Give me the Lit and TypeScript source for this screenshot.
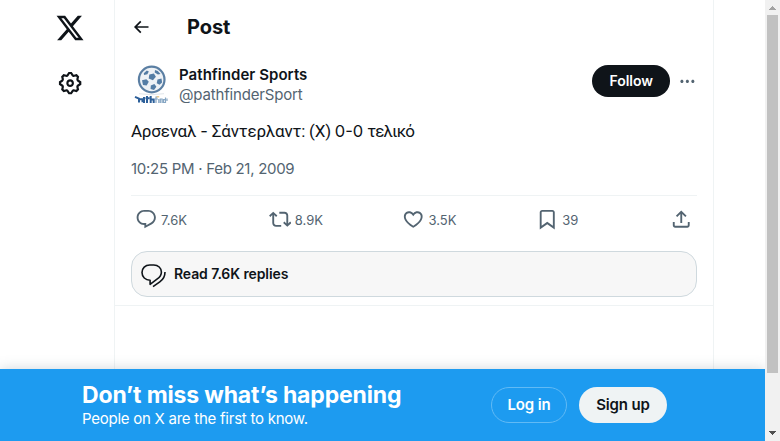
import { LitElement, html, css, svg } from "lit";
import { customElement, property } from "lit/decorators.js";

const ICONS: Record<string, string> = {
  logo: "M18.244 2.25h3.308l-7.227 8.26 8.502 11.24H16.17l-5.214-6.817L4.99 21.75H1.68l7.73-8.835L1.254 2.25H8.08l4.713 6.231zm-1.161 17.52h1.833L7.084 4.126H5.117z",
  settings: "M10.54 1.75h2.92l1.57 2.36c.11.17.32.25.53.21l2.53-.59 2.17 2.17-.58 2.54c-.05.2.04.41.21.53l2.36 1.57v2.92l-2.36 1.57c-.17.12-.26.33-.21.53l.58 2.54-2.17 2.17-2.53-.59c-.21-.04-.42.04-.53.21l-1.57 2.36h-2.92l-1.58-2.36c-.11-.17-.32-.25-.52-.21l-2.54.59-2.17-2.17.58-2.54c.05-.2-.03-.41-.21-.53l-2.35-1.57v-2.92L4.1 8.97c.18-.12.26-.33.21-.53L3.73 5.9 5.9 3.73l2.54.59c.2.04.41-.04.52-.21l1.58-2.36zm1.07 2l-.98 1.47C10.05 6.08 9 6.5 7.99 6.27l-1.46-.34-.6.6.33 1.46c.24 1.01-.18 2.07-1.05 2.64l-1.46.98v.78l1.46.98c.87.57 1.29 1.63 1.05 2.64l-.33 1.46.6.6 1.46-.34c1.01-.23 2.06.19 2.64 1.05l.98 1.47h.78l.97-1.47c.58-.86 1.63-1.28 2.65-1.05l1.45.34.61-.6-.34-1.46c-.23-1.01.18-2.07 1.05-2.64l1.47-.98v-.78l-1.47-.98c-.87-.57-1.28-1.63-1.05-2.64l.34-1.46-.61-.6-1.45.34c-1.02.23-2.07-.19-2.65-1.05l-.97-1.47h-.78zM12 10.5c-.83 0-1.5.67-1.5 1.5s.67 1.5 1.5 1.5 1.5-.67 1.5-1.5-.67-1.5-1.5-1.5zM8.5 12c0-1.93 1.57-3.5 3.5-3.5s3.5 1.57 3.5 3.5-1.57 3.5-3.5 3.5-3.5-1.57-3.5-3.5z",
  back: "M7.414 13l5.043 5.04-1.414 1.42L3.586 12l7.457-7.46 1.414 1.42L7.414 11H21v2H7.414z",
  more: "M3 12c0-1.1.9-2 2-2s2 .9 2 2-.9 2-2 2-2-.9-2-2zm9 2c1.1 0 2-.9 2-2s-.9-2-2-2-2 .9-2 2 .9 2 2 2zm7 0c1.1 0 2-.9 2-2s-.9-2-2-2-2 .9-2 2 .9 2 2 2z",
  reply: "M1.751 10c0-4.42 3.584-8 8.005-8h4.366c4.49 0 8.129 3.64 8.129 8.13 0 2.96-1.607 5.68-4.196 7.11l-8.054 4.46v-3.69h-.067c-4.49.1-8.183-3.51-8.183-8.01zm8.005-6c-3.317 0-6.005 2.69-6.005 6 0 3.37 2.77 6.08 6.138 6.01l.351-.01h1.761v2.3l5.087-2.81c1.951-1.08 3.163-3.13 3.163-5.36 0-3.39-2.744-6.13-6.129-6.13H9.756z",
  repost: "M4.5 3.88l4.432 4.14-1.364 1.46L5.5 7.55V16c0 1.1.896 2 2 2H13v2H7.5c-2.209 0-4-1.79-4-4V7.55L1.432 9.48.068 8.02 4.5 3.88zM16.5 6H11V4h5.5c2.209 0 4 1.79 4 4v8.45l2.068-1.93 1.364 1.46-4.432 4.14-4.432-4.14 1.364-1.46 2.068 1.93V8c0-1.1-.896-2-2-2z",
  like: "M16.697 5.5c-1.222-.06-2.679.51-3.89 2.16l-.805 1.09-.806-1.09C9.984 6.01 8.526 5.44 7.304 5.5c-1.243.07-2.349.78-2.91 1.91-.552 1.12-.633 2.78.479 4.82 1.074 1.97 3.257 4.27 7.129 6.61 3.87-2.34 6.052-4.64 7.126-6.61 1.111-2.04 1.03-3.7.477-4.82-.561-1.13-1.666-1.84-2.908-1.91zm4.187 7.69c-1.351 2.48-4.001 5.12-8.379 7.67l-.503.3-.504-.3c-4.379-2.55-7.029-5.19-8.382-7.67-1.36-2.5-1.41-4.86-.514-6.67.887-1.79 2.647-2.91 4.601-3.01 1.651-.09 3.368.56 4.798 2.01 1.429-1.45 3.146-2.1 4.796-2.01 1.954.1 3.714 1.22 4.601 3.01.896 1.81.846 4.17-.514 6.67z",
  bookmark: "M4 4.5C4 3.12 5.119 2 6.5 2h11C18.881 2 20 3.12 20 4.5v18.44l-8-5.71-8 5.71V4.5zM6.5 4c-.276 0-.5.22-.5.5v14.56l6-4.29 6 4.29V4.5c0-.28-.224-.5-.5-.5h-11z",
  share: "M12 2.59l5.7 5.7-1.41 1.42L13 6.41V16h-2V6.41l-3.3 3.3-1.41-1.42L12 2.59zM21 15l-.02 3.51c0 1.38-1.12 2.49-2.5 2.49H5.5C4.11 21 3 19.88 3 18.5V15h2v3.5c0 .28.22.5.5.5h12.98c.28 0 .5-.22.5-.5L19 15h2z",
};

@customElement("x-icon")
export class XIcon extends LitElement {
  @property() name = "";
  static styles = css`
    :host { display: block; flex: none; width: 22.5px; height: 22.5px; }
    svg { display: block; width: 100%; height: 100%; fill: currentColor; }
  `;
  render() {
    return html`<svg viewBox="0 0 24 24">${svg`<path d=${ICONS[this.name] ?? ""}></path>`}</svg>`;
  }
}

@customElement("app-root")
export class AppRoot extends LitElement {
  static styles = css`
    :host {
      display: block; position: relative; width: 780px; height: 441px; overflow: hidden;
      background: #fff; color: #0f1419; font-family: Inter, "Noto Sans", sans-serif; font-size: 15px;
    }
    * { box-sizing: border-box; }
    .page { display: flex; height: 441px; }
    .rail { width: 114px; padding: 13px 0 0 55px; }
    .logo { width: 30px; height: 30px; }
    .gear { width: 26.25px; height: 26.25px; margin: 27px 0 0 2px; }
    .column { width: 600px; border: 1px solid #eff3f4; border-width: 0 1px; }
    .spacer { flex: 1; }
    .header { display: flex; align-items: center; height: 53px; padding-left: 16px; }
    .back { width: 20px; height: 20px; }
    .title { margin: 0 0 0 36px; font-size: 20px; line-height: 24px; font-weight: 700; letter-spacing: -0.05px; }
    .post { height: 253px; padding: 12px 16px 0; border-bottom: 1px solid #eff3f4; }
    .author { display: flex; height: 40px; }
    .avatar { width: 40px; height: 40px; flex: none; }
    .names { margin-left: 8px; flex: 1; line-height: 20px; white-space: nowrap; }
    .name { font-weight: 600; letter-spacing: 0.05px; }
    .handle { color: #536471; letter-spacing: -0.17px; }
    .follow {
      width: 78px; height: 32px; border-radius: 16px; background: #0f1419; color: #fff;
      font-weight: 600; font-size: 14px; line-height: 32px; text-align: center; letter-spacing: -0.05px;
    }
    .more { width: 18.75px; height: 18.75px; color: #536471; margin: 7px 0 0 8px; }
    .text { margin-top: 14px; height: 24px; font-family: Roboto, "Noto Sans", sans-serif; font-size: 17px; line-height: 24px; white-space: nowrap; letter-spacing: -0.22px; }
    .latin { font-family: Inter, sans-serif; font-size: 16.5px; letter-spacing: 0; }
    .result { letter-spacing: -0.9px; }
    .date { margin-top: 16px; line-height: 20px; color: #536471; letter-spacing: -0.28px; }
    .actions {
      display: flex; margin-top: 16px; padding: 12px 4px 0; height: 56px;
      border-top: 1px solid #eff3f4; color: #536471; font-size: 13px;
    }
    .action { display: flex; width: 133.75px; flex: none; height: 24px; line-height: 25px; }
    .action span { margin-left: 3.5px; }
    .action:nth-child(3) { margin-left: -0.75px; width: 134.5px; }
    .action:nth-child(3) span { margin-left: 4.25px; }
    .action.last { width: 22.5px; }
    .replies {
      display: flex; align-items: center; height: 46px; border: 1px solid #cfd9de; border-radius: 16px;
      background: #f7f7f7; padding-left: 8px; font-weight: 600; font-size: 14px; line-height: 20px; letter-spacing: -0.1px;
    }
    .replies span { padding-bottom: 1px; }
    .bubbles { width: 28px; height: 28px; margin-right: 6px; }
    .banner {
      position: absolute; left: 0; bottom: 0; width: 765px; height: 72px; display: flex; align-items: flex-start;
      padding-left: 82px; background: #1d9bf0; color: #fff; box-shadow: 0 0 12px rgba(101,119,134,.3);
    }
    .pitch { width: 409px; padding-top: 12px; white-space: nowrap; }
    .big { font-size: 23px; line-height: 28px; font-weight: 700; letter-spacing: -0.16px; }
    .small { line-height: 20px; letter-spacing: -0.25px; }
    .pill { height: 36px; margin-top: 18px; border-radius: 18px; font-weight: 600; line-height: 36px; text-align: center; letter-spacing: -0.15px; }
    .login { width: 76px; border: 1px solid #61baf5; line-height: 34px; }
    .signup { width: 88px; margin-left: 12px; background: #eff3f4; color: #0f1419; }
    .scroll {
      position: absolute; right: 0; top: 0; width: 15px; height: 441px; background: #f1f1f1;
      display: flex; flex-direction: column; align-items: center;
    }
    .arrow { width: 15px; height: 15px; display: block; flex: none; }
    .thumb { width: 11px; height: 358px; background: #c1c1c1; }
  `;

  private stats = [["reply", "7.6K"], ["repost", "8.9K"], ["like", "3.5K"], ["bookmark", "39"]];

  private avatar() {
    return html`<svg class="avatar" viewBox="0 0 40 40">
      <circle cx="20.7" cy="14.5" r="12.8" fill="#eef2f6" stroke="#5b7fa3" stroke-width="2.2"></circle>
      <g fill="#547da5">
        <path d="M18.3 9.5l4.6-1 2 3.3-3 3.4-4.2-1.6z"></path>
        <path d="M11 15.2l4.4-1 2.4 2.6-2.2 3.8-3.6-.6z"></path>
        <path d="M19.8 20.5l3.6-1.4 2 2.6-2.4 3.2-3.4-1z"></path>
        <path d="M26.5 14.5l4-1 .6 4-2.6 2.2-2.8-1.4z"></path>
        <path d="M12.8 8.2l3-2.6 2 .8-1.4 2.8-3.4.8z"></path>
        <path d="M24 5l2.8 1 2.7 3-2.6.4-3.2-2z"></path>
      </g>
      <path d="M8 28.7q12 2 25 0" fill="none" stroke="#e1e6eb" stroke-width="1"></path>
      <g fill="none" stroke="#2d609a" stroke-width="2">
        <path d="M4 31.8l4 1.8v4M8 34.3h3.5v3M13 32v6M16 31v7M14.5 33.3h4M19.7 31v7M19.7 34.4h3V38"></path>
      </g>
      <g fill="none" stroke="#86a6c3" stroke-width="1.2">
        <path d="M25 38v-6h1.5M24 34h3M27.8 34v4M29.3 38v-4h1.8v4M34.5 32.5v5h-2v-2.8h2M36 33.5v2.5"></path>
      </g>
      <path d="M25.6 31.8h2.6" stroke="#e6bd76" stroke-width="1.2"></path>
    </svg>`;
  }

  render() {
    return html`
      <div class="page">
        <nav class="rail">
          <x-icon class="logo" name="logo"></x-icon>
          <x-icon class="gear" name="settings"></x-icon>
        </nav>
        <main class="column">
          <header class="header">
            <x-icon class="back" name="back"></x-icon>
            <h1 class="title">Post</h1>
          </header>
          <article class="post">
            <div class="author">
              ${this.avatar()}
              <div class="names">
                <div><span class="name">Pathfinder Sports</span></div>
                <div><span class="handle">@pathfinderSport</span></div>
              </div>
              <div class="follow">Follow</div>
              <x-icon class="more" name="more"></x-icon>
            </div>
            <div class="text">Αρσεναλ <span class="latin">-</span> Σάντερλαντ: (Χ) <span class="latin">0-0</span> <span class="result">τελικό</span></div>
            <div class="date">10:25 PM · Feb 21, 2009</div>
            <div class="actions">
              ${this.stats.map(([icon, count]) => html`<div class="action"><x-icon name=${icon}></x-icon><span>${count}</span></div>`)}
              <div class="action last"><x-icon name="share"></x-icon></div>
            </div>
            <div class="replies">
              <svg class="bubbles" viewBox="0 0 28 28" fill="none" stroke="#0f1419" stroke-width="1.6" stroke-linejoin="round">
                <path d="M9.8 5h4c4.3 0 7.6 3 7.6 7 0 2.8-1.5 5.1-4.1 6.9l-7.2 5.4v-4.1C5.3 20.2 2 16.8 2 12.6 2 8.2 5.2 5 9.8 5z"></path>
                <path d="M25 12c0 4.1-1.6 7.4-5.2 9.9l-6.8 4.8"></path>
              </svg>
              <span>Read 7.6K replies</span>
            </div>
          </article>
        </main>
        <div class="spacer"></div>
      </div>
      <div class="banner">
        <div class="pitch">
          <div><span class="big">Don’t miss what’s happening</span></div>
          <div class="small">People on X are the first to know.</div>
        </div>
        <div class="pill login">Log in</div>
        <div class="pill signup">Sign up</div>
      </div>
      <div class="scroll">
        <svg class="arrow" viewBox="0 0 15 15" shape-rendering="crispEdges"><path d="M4 10h7L7.5 6z" fill="#a3a3a3"></path></svg>
        <div class="thumb"></div>
        <div class="spacer"></div>
        <svg class="arrow" viewBox="0 0 15 15" shape-rendering="crispEdges"><path d="M4 5h7L7.5 9z" fill="#505050"></path></svg>
      </div>
    `;
  }
}
